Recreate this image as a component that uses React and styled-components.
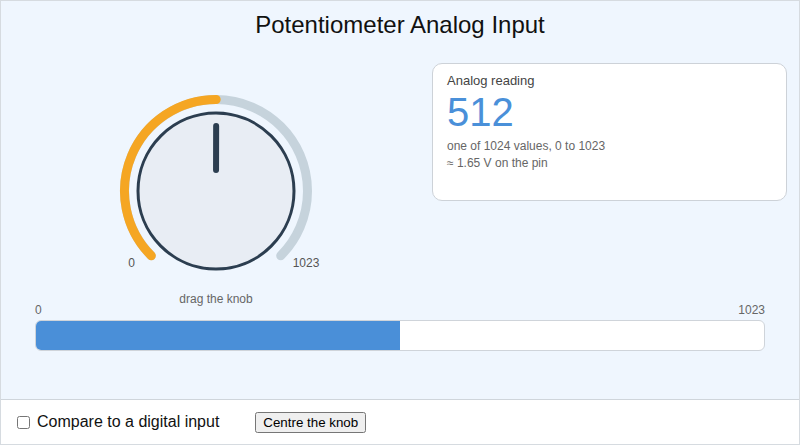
import React, { useState } from 'react';
import styled, { createGlobalStyle } from 'styled-components';

const GlobalStyle = createGlobalStyle`
  body {
    margin: 0;
    font-family: "Liberation Sans", Arial, sans-serif;
    background: #fff;
  }
`;

const CX = 120;
const CY = 100;
const ARC_R = 91.5;
const START = -135;
const END = 135;

const polar = (deg, r) => {
  const rad = (deg * Math.PI) / 180;
  return [CX + r * Math.sin(rad), CY - r * Math.cos(rad)];
};

const arcPath = (from, to, r) => {
  const [x1, y1] = polar(from, r);
  const [x2, y2] = polar(to, r);
  const large = to - from > 180 ? 1 : 0;
  return `M ${x1} ${y1} A ${r} ${r} 0 ${large} 1 ${x2} ${y2}`;
};

const Knob = ({ value }) => {
  const angle = START + (value / 1023) * (END - START);
  const [px1, py1] = polar(angle, 65);
  const [px2, py2] = polar(angle, 21);
  return (
    <KnobSvg width="240" height="192" viewBox="0 0 240 192">
      <path d={arcPath(START, END, ARC_R)} stroke="#c6d3dc" strokeWidth="9" fill="none" strokeLinecap="round" />
      <path d={arcPath(START, angle, ARC_R)} stroke="#f5a623" strokeWidth="9" fill="none" strokeLinecap="round" />
      <circle cx={CX} cy={CY} r="78" fill="#e8edf4" stroke="#2c3e50" strokeWidth="3" />
      <line x1={px1} y1={py1} x2={px2} y2={py2} stroke="#2c3e50" strokeWidth="6" strokeLinecap="round" />
      <text x="35.5" y="175.5" textAnchor="middle">0</text>
      <text x="210" y="175.5" textAnchor="middle">1023</text>
    </KnobSvg>
  );
};

export default function App() {
  const [value, setValue] = useState(512);
  const [digital, setDigital] = useState(false);
  const volts = ((value / 1023) * 3.3).toFixed(2);

  return (
    <>
      <GlobalStyle />
      <Frame>
        <Panel>
          <Title>Potentiometer Analog Input</Title>
          <Main>
            <KnobColumn>
              <Knob value={value} />
              <Caption>drag the knob</Caption>
            </KnobColumn>
            <Card>
              <CardLabel>Analog reading</CardLabel>
              <Reading>{value}</Reading>
              <Notes>
                <div>one of 1024 values, 0 to 1023</div>
                <div>≈ {volts} V on the pin</div>
              </Notes>
            </Card>
          </Main>
          <Meter>
            <Scale>
              <span>0</span>
              <span>1023</span>
            </Scale>
            <Track>
              <Fill style={{ width: `${(value / 1023) * 100}%` }} />
            </Track>
          </Meter>
        </Panel>
        <Footer>
          <CheckLabel>
            <input type="checkbox" checked={digital} onChange={(e) => setDigital(e.target.checked)} />
            Compare to a digital input
          </CheckLabel>
          <Button onClick={() => setValue(512)}>Centre the knob</Button>
        </Footer>
      </Frame>
    </>
  );
}

const Frame = styled.div`
  width: 800px;
  height: 445px;
  box-sizing: border-box;
  border: 1px solid #d6dbe0;
  display: flex;
  flex-direction: column;
`;

const Panel = styled.div`
  height: 399px;
  box-sizing: border-box;
  background: #eff6fe;
  border-bottom: 1px solid #cfd5db;
  padding: 10px 12px 0;
`;

const Title = styled.h1`
  margin: 0;
  font-size: 24px;
  font-weight: normal;
  line-height: normal;
  text-align: center;
  color: #111;
`;

const Main = styled.div`
  display: grid;
  grid-template-columns: 406px 1fr;
  column-gap: 13px;
  align-items: start;
  margin-top: 24px;
`;

const KnobColumn = styled.div`
  display: flex;
  flex-direction: column;
  align-items: center;
  padding-top: 28px;
`;

const KnobSvg = styled.svg`
  display: block;

  text {
    font-family: "Liberation Sans", Arial, sans-serif;
    font-size: 12px;
    fill: #555;
  }
`;

const Caption = styled.div`
  margin-top: 11px;
  font-size: 12px;
  line-height: 11px;
  color: #666;
`;

const Card = styled.div`
  height: 138px;
  box-sizing: border-box;
  background: #fff;
  border: 1px solid #cdd2d8;
  border-radius: 10px;
  padding: 9px 14px;
`;

const CardLabel = styled.div`
  font-size: 13px;
  color: #444;
`;

const Reading = styled.div`
  margin-top: 4px;
  font-size: 40px;
  line-height: 40px;
  color: #4a90d9;
`;

const Notes = styled.div`
  margin-top: 6px;
  font-size: 12px;
  line-height: 17px;
  color: #666;
`;

const Meter = styled.div`
  padding: 0 22px;
`;

const Scale = styled.div`
  display: flex;
  justify-content: space-between;
  font-size: 12px;
  line-height: 10px;
  color: #666;
`;

const Track = styled.div`
  margin-top: 5px;
  height: 31px;
  box-sizing: border-box;
  background: #fff;
  border: 1px solid #cfd4da;
  border-radius: 6px;
  overflow: hidden;
`;

const Fill = styled.div`
  height: 100%;
  background: #4a8fd8;
`;

const Footer = styled.div`
  flex: 1;
  display: flex;
  align-items: center;
  gap: 36px;
  padding: 0 12px;
  background: #fff;
`;

const CheckLabel = styled.label`
  display: flex;
  align-items: center;
  gap: 4px;
  font-size: 16px;
  color: #111;

  input {
    margin: 3px 3px 3px 4px;
  }
`;

const Button = styled.button`
  font-family: "Liberation Sans", Arial, sans-serif;
  font-size: 13.33px;
`;
